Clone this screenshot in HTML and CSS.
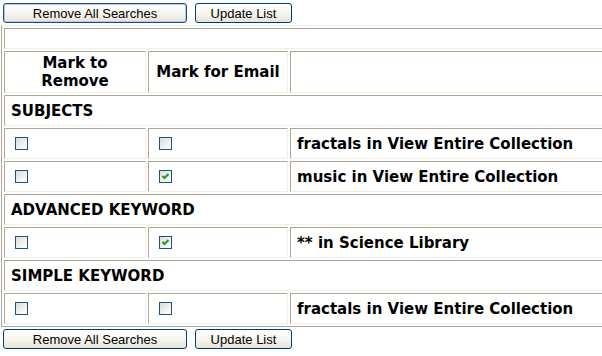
FILE: index.html
```html
<!DOCTYPE html>
<html lang="en">
<head>
    <meta charset="UTF-8" />
    <title>My Saved Searches</title>
    <link rel="stylesheet" href="styles.css">
</head>
<body>

    <form class="saved-searches">
        <div class="actions">
            <button type="button" class="btn btn-default btn-wide">Remove All Searches</button>
            <button type="button" class="btn btn-narrow">Update List</button>
        </div>

        <table class="search-list">
            <tr class="spacer-row">
                <td colspan="3"></td>
            </tr>
            <tr class="head-row">
                <th class="col-remove">Mark to<br>Remove</th>
                <th class="col-email">Mark for Email</th>
                <th></th>
            </tr>

            <tr class="group-row"><td colspan="3">SUBJECTS</td></tr>
            <tr class="item-row">
                <td><span class="box"></span></td>
                <td><span class="box"></span></td>
                <td>fractals in View Entire Collection</td>
            </tr>
            <tr class="item-row">
                <td><span class="box"></span></td>
                <td><span class="box checked"><svg viewBox="0 0 11 11" width="11" height="11"><path d="M2.5 5 L4.5 7 L8.5 3" fill="none" stroke="#21a121" stroke-width="2.2"/></svg></span></td>
                <td>music in View Entire Collection</td>
            </tr>

            <tr class="group-row"><td colspan="3">ADVANCED KEYWORD</td></tr>
            <tr class="item-row">
                <td><span class="box"></span></td>
                <td><span class="box checked"><svg viewBox="0 0 11 11" width="11" height="11"><path d="M2.5 5 L4.5 7 L8.5 3" fill="none" stroke="#21a121" stroke-width="2.2"/></svg></span></td>
                <td>** in Science Library</td>
            </tr>

            <tr class="group-row"><td colspan="3">SIMPLE KEYWORD</td></tr>
            <tr class="item-row">
                <td><span class="box"></span></td>
                <td><span class="box"></span></td>
                <td>fractals in View Entire Collection</td>
            </tr>
        </table>

        <div class="actions">
            <button type="button" class="btn btn-wide">Remove All Searches</button>
            <button type="button" class="btn btn-narrow">Update List</button>
        </div>
    </form>

</body>
</html>
```

FILE: styles.css
```css
* {
    box-sizing: border-box;
    margin: 0;
    padding: 0;
}

html, body {
    overflow: hidden;
}

body {
    background: #fff;
    color: #000;
    font-family: 'DejaVu Sans', Verdana, sans-serif;
}

.actions {
    display: flex;
    gap: 8px;
    padding-left: 3px;
    margin-top: 3px;
}

.saved-searches .search-list + .actions {
    margin-top: 2px;
}

.btn {
    height: 20px;
    border: 1px solid #003c74;
    border-radius: 3px;
    background: linear-gradient(#ffffff, #f6f5ee 55%, #e6e3d6);
    font-family: 'Liberation Sans', Arial, sans-serif;
    font-size: 13px;
    color: #000;
    line-height: 17px;
}

.btn-wide {
    width: 184px;
}

.btn-narrow {
    width: 97px;
}

.btn-default {
    border-color: #1f4c86;
    box-shadow: inset 0 0 0 1px #b4c8ee;
}

.search-list {
    margin-top: 2px;
    margin-left: 1px;
    width: 820px;
    border-collapse: separate;
    border-spacing: 2px;
    border: 1px solid;
    border-color: #f1efe2 #aca899 #aca899 #aca899;
}

    .search-list td,
    .search-list th {
        border: 1px solid;
        border-color: #aca899 #f1efe2 #f1efe2 #aca899;
        padding: 0 6px;
        font-size: 15px;
        font-weight: bold;
        vertical-align: middle;
    }

.spacer-row td {
    height: 21px;
}

.head-row th {
    height: 42px;
    text-align: center;
}

    .head-row .col-remove {
        width: 142px;
    }

    .head-row .col-email {
        width: 140px;
    }

.group-row td {
    height: 31px;
    text-align: left;
}

.item-row td {
    height: 31px;
}

.box {
    display: block;
    width: 13px;
    height: 13px;
    margin-left: 4px;
    border: 1px solid #1c5180;
    background: linear-gradient(135deg, #dcdcd7, #f6f6f3 70%, #ffffff);
}

    .box svg {
        display: block;
    }
```
